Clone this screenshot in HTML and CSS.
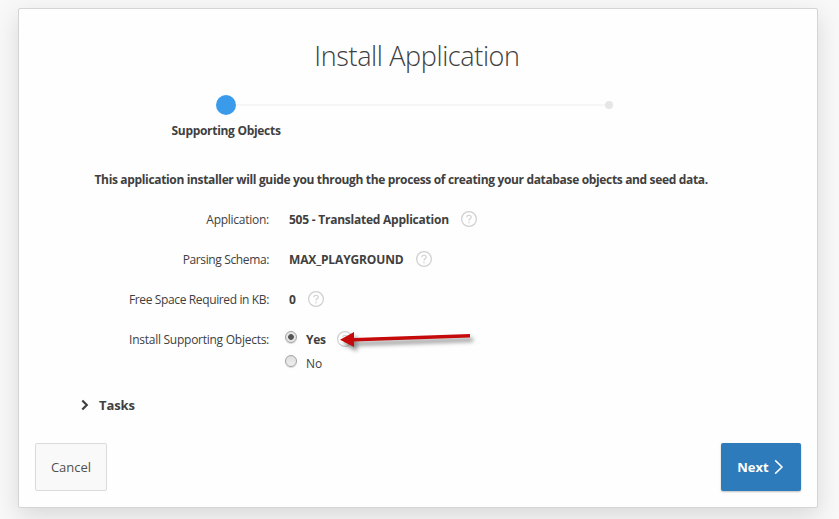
FILE: index.html
```html
<!DOCTYPE html>
<html lang="en">
<head>
<meta charset="utf-8">
<title>Install Application</title>
<link rel="stylesheet" href="styles.css">
</head>
<body>
<main class="wizard">
  <h1 class="title"><span>Install Application</span></h1>
  <div class="progress">
    <span class="step current"></span>
    <span class="track"></span>
    <span class="step"></span>
  </div>
  <div class="step-label"><span>Supporting Objects</span></div>
  <p class="intro"><span>This application installer will guide you through the process of creating your database objects and seed data.</span></p>
  <div class="fields">
    <div class="row"><span class="label l1">Application:</span><strong class="value v1">505 - Translated Application</strong>
      <svg class="help" viewBox="0 0 16 16"><circle cx="8" cy="8" r="7.4"/><path d="M5.8 6.3C5.8 3.5 10.2 3.6 10.2 6.2C10.2 7.8 8 7.7 8 9.5M8 10.8V12.2"/></svg></div>
    <div class="row"><span class="label l2">Parsing Schema:</span><strong class="value v2">MAX_PLAYGROUND</strong>
      <svg class="help" viewBox="0 0 16 16"><circle cx="8" cy="8" r="7.4"/><path d="M5.8 6.3C5.8 3.5 10.2 3.6 10.2 6.2C10.2 7.8 8 7.7 8 9.5M8 10.8V12.2"/></svg></div>
    <div class="row"><span class="label l3">Free Space Required in KB:</span><strong class="value v3">0</strong>
      <svg class="help" viewBox="0 0 16 16"><circle cx="8" cy="8" r="7.4"/><path d="M5.8 6.3C5.8 3.5 10.2 3.6 10.2 6.2C10.2 7.8 8 7.7 8 9.5M8 10.8V12.2"/></svg></div>
    <div class="row"><span class="label l4">Install Supporting Objects:</span><span class="radio checked"></span><strong class="yes">Yes</strong>
      <svg class="help" viewBox="0 0 16 16"><circle cx="8" cy="8" r="7.4"/><path d="M5.8 6.3C5.8 3.5 10.2 3.6 10.2 6.2C10.2 7.8 8 7.7 8 9.5M8 10.8V12.2"/></svg>
      <svg class="arrow" viewBox="0 0 150 30"><path d="M9 12.7L23 5L23 11L139 7V10.4L23 14.6V20Z"/></svg></div>
    <div class="row option"><span class="label"></span><span class="radio"></span><span class="no">No</span></div>
  </div>
  <div class="tasks">
    <svg class="chevron" viewBox="0 0 8 12"><path d="M1.3 1.5L5.8 6L1.3 10.5"/></svg><span>Tasks</span>
  </div>
  <footer class="actions">
    <button class="button cancel"><span>Cancel</span></button>
    <button class="button next"><span>Next</span><svg viewBox="0 0 10 16"><path d="M1.2 1.4L8 8L1.2 14.6"/></svg></button>
  </footer>
</main>
</body>
</html>
```
FILE: styles.css
```css
* { box-sizing: border-box; }
body {
  margin: 0;
  padding: 8px 0 0 18px;
  height: 519px;
  overflow: hidden;
  background: #f8f8f8;
  color: #404040;
  font: 12px/20px "Open Sans", "Noto Sans", sans-serif;
}
.wizard {
  width: 800px;
  height: 500px;
  padding: 0 16px;
  display: flex;
  flex-direction: column;
  background: #fefefe;
  border: 1px solid #d4d4d4;
  border-radius: 2px;
  box-shadow: 0 8px 24px rgba(0, 0, 0, .13);
  white-space: nowrap;
}
.title {
  margin: 27px 2px 0 0;
  height: 40px;
  text-align: center;
  font-size: 27px;
  line-height: 40px;
  font-weight: 300;
  letter-spacing: -.38px;
}
.progress {
  height: 20px;
  margin: 19px 188px 0 181px;
  display: flex;
  align-items: center;
}
.track { flex: 1; height: 2px; background: #f6f6f6; }
.step { width: 8px; height: 8px; border-radius: 50%; background: #e6e6e6; }
.step.current { width: 20px; height: 20px; background: #3a9bea; }
.step-label {
  width: 110px;
  margin: 6px 0 0 136.5px;
  font-weight: 700;
  letter-spacing: -.3px;
}
.intro { margin: 29px 0 0 59.5px; font-weight: 700; letter-spacing: -.343px; }
.fields { margin-top: 20px; }
.row { height: 40px; display: flex; align-items: flex-start; position: relative; }
.label { width: 234px; margin-right: 20px; text-align: right; letter-spacing: -.26px; }
.l2, .l3 { letter-spacing: -.37px; }
.value, .yes { font-weight: 700; letter-spacing: -.24px; }
.v2 { letter-spacing: -.14px; }
.help { width: 16px; height: 16px; margin: 1px 0 0 12px; fill: none; stroke: #cfcfcf; stroke-width: 1.2; overflow: visible; }
.yes + .help { margin-left: 11px; }
.radio {
  width: 12px;
  height: 12px;
  margin: 1px 9px 0 -4px;
  border: 1px solid #a2a2a2;
  border-radius: 50%;
  background: linear-gradient(#dedede, #efefef);
  box-shadow: 0 1px 1px rgba(0, 0, 0, .15);
}
.radio.checked { background: radial-gradient(circle, #555 0 2.5px, #e6e6e6 3.2px); }
.row:nth-child(4) { height: 24px; }
.option { height: 20px; }
.arrow {
  position: absolute;
  left: 296px;
  top: -3px;
  width: 150px;
  height: 30px;
  fill: #c40a0a;
  filter: drop-shadow(3px 4px 2px rgba(0, 0, 0, .45));
}
.tasks {
  height: 24px;
  margin: 19px 0 0 46px;
  display: flex;
  align-items: center;
  font-size: 13px;
  font-weight: 700;
  letter-spacing: -.1px;
}
.chevron { width: 8px; height: 12px; margin-right: 10px; fill: none; stroke: #404040; stroke-width: 2.2; }
.actions { margin-top: 26px; display: flex; justify-content: space-between; }
.button {
  height: 48px;
  padding: 0;
  display: flex;
  align-items: center;
  justify-content: center;
  font: 13px/20px "Open Sans", "Noto Sans", sans-serif;
  border-radius: 2px;
}
.cancel { width: 72px; color: #505050; background: #f9f9f9; border: 1px solid #dadada; }
.next {
  width: 80px;
  color: #fff;
  background: #2d7bbb;
  border: 0;
  font-weight: 700;
  box-shadow: 0 1px 2px rgba(0, 0, 0, .25);
}
.next svg { width: 10px; height: 16px; margin-left: 5px; margin-right: 1px; fill: none; stroke: #fff; stroke-width: 1.5; }
```
